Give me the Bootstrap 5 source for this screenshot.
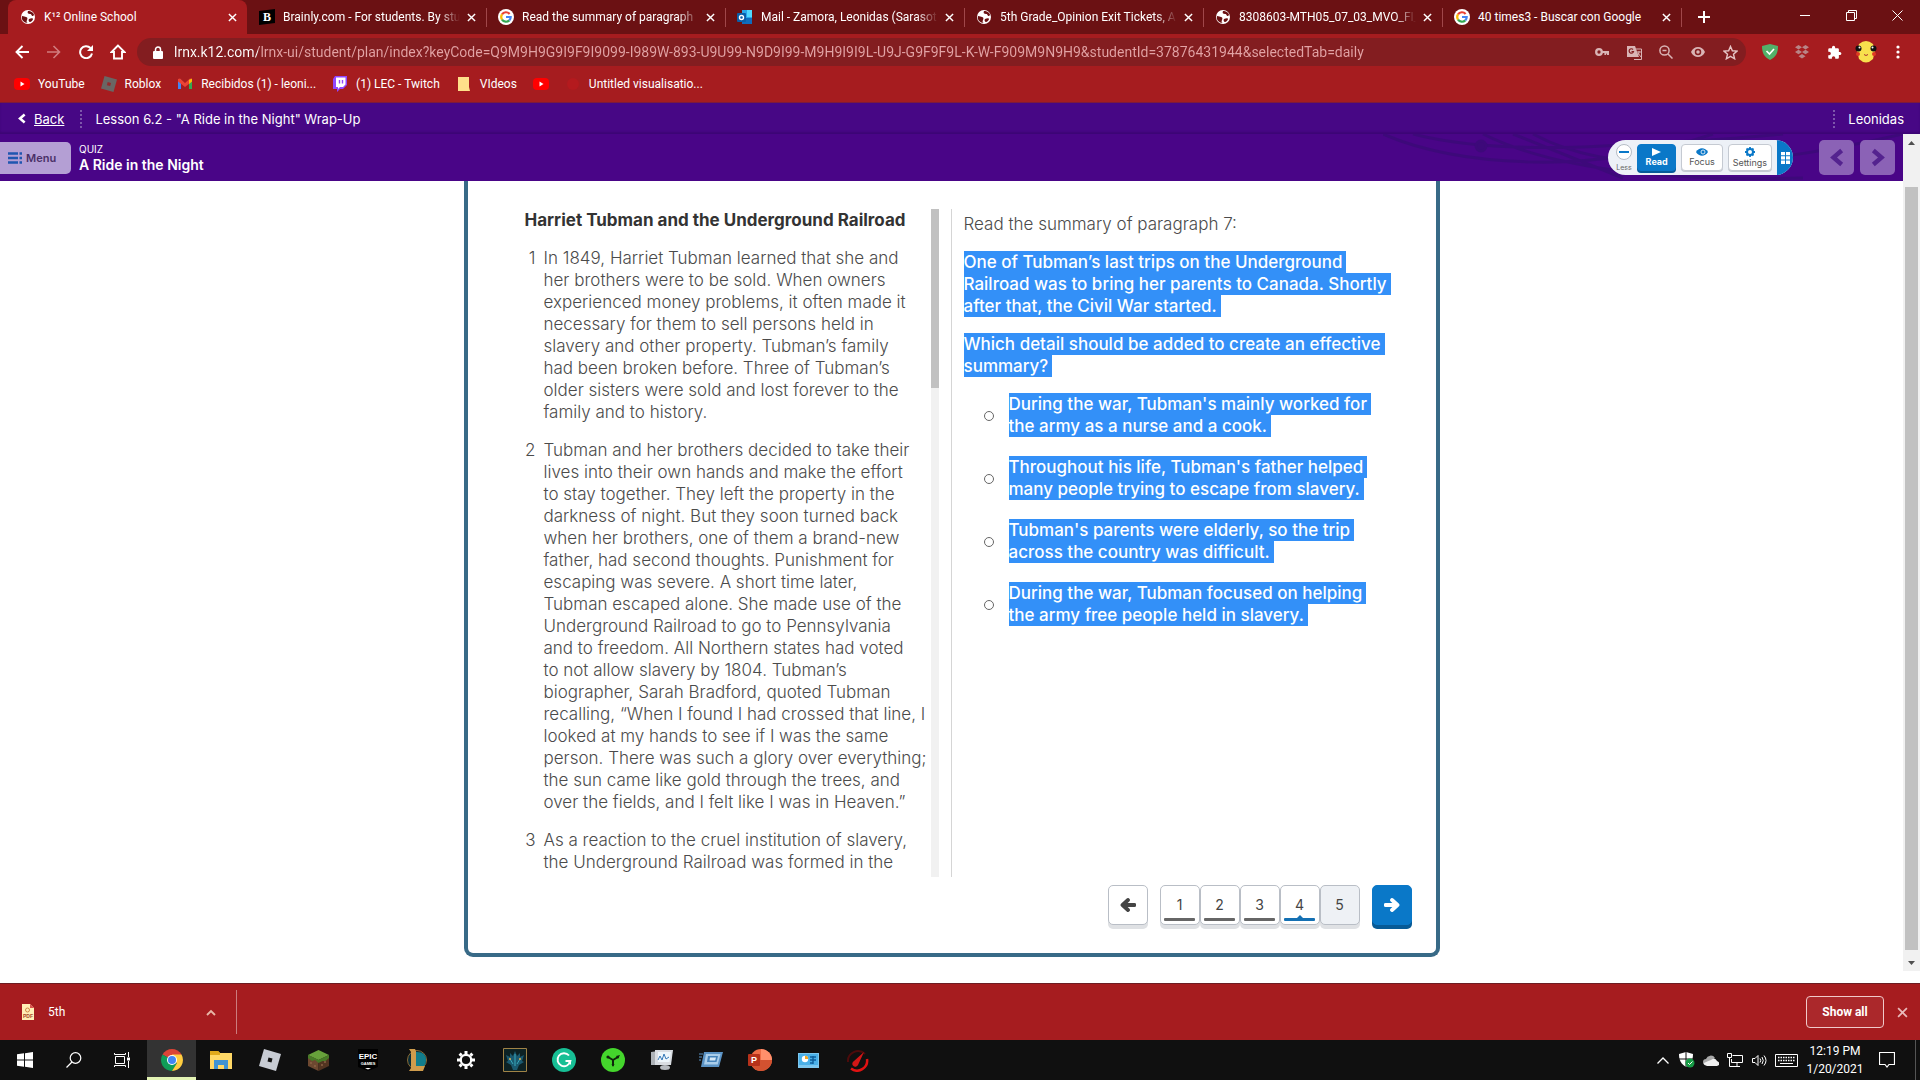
<!DOCTYPE html>
<html lang="en">
<head>
<meta charset="utf-8">
<meta name="viewport" content="width=device-width, initial-scale=1">
<title>K12 Online School</title>
<link rel="stylesheet" href="https://cdn.jsdelivr.net/npm/bootstrap@5.3.0/dist/css/bootstrap.min.css">
<style>
:root{--red:#a61c1f;--dark:#6b1113;--violet:#490587;--blue:#0a78c8;--frame:#386a87}
body{font-family:Roboto,"Liberation Sans",sans-serif;font-size:12px;line-height:16px;color:#fff;background:#fff}
button{font-family:inherit}
svg{display:block;flex:none}
a{color:inherit;text-decoration:none}
.plain{border:0;background:none;padding:0;color:inherit}
.cell{display:flex;align-items:center;justify-content:center;flex:none}
/* browser chrome */
.tabstrip{height:34px;background:var(--dark);padding-left:8px}
.tab{width:239px;height:34px;padding:0 10px 0 12px;position:relative}
.tab.on{background:var(--red);border-radius:8px 8px 0 0}
.tab+.tab+.tab::before,.newtab::before{content:"";position:absolute;left:0;top:8px;width:1px;height:19px;background:#a0474a}
.tab-title{flex:1;min-width:0;overflow:hidden;white-space:nowrap;margin-left:8px;margin-right:7px;height:16px}
.fade-end{-webkit-mask-image:linear-gradient(90deg,#000 88%,transparent)}
.newtab{position:relative;width:46px;height:34px}
.win{width:46px;height:34px;padding-bottom:4px}
.toolbar{height:36px;background:var(--red);padding:0 6px}
.nav-ic{width:32px;height:32px}
.omni{background:#831d20;border-radius:14px;height:28px;padding-left:4px;margin-left:3px;margin-right:8px}
.lock{width:33px}
.url{flex:1;min-width:0;border:0;outline:0;padding:0;font-size:14px;line-height:20px;-webkit-text-fill-color:transparent;background:linear-gradient(90deg,#fff 84px,#e2a3a5 84px);-webkit-background-clip:text;background-clip:text}
.marks{height:33px;background:var(--red);padding:0 14px 4px;gap:16px;border-bottom:1px solid #7c1a3c}
.marks a{display:flex;align-items:center;gap:8px;white-space:nowrap}
/* course header */
.course{font-family:Inter,"Open Sans",sans-serif}
.crumbs{height:31px;background:#470785;padding:0 16px 0 18px;font-size:13px;box-shadow:inset 0 -2px 2px #3d0675}
.dots{width:2px;height:18px;margin:0 13px 0 16px;background:repeating-linear-gradient(#7d57ab 0 2px,transparent 2px 4px)}
.quizbar{height:47px;background:var(--violet);position:relative}
.waves{position:absolute;right:0;top:0}
.menu-btn{width:71px;height:32px;border-radius:0 5px 5px 0;background:#b49fd4;color:#4a2f68;font-size:11px;font-weight:600;padding-left:8px}
.kicker{font-size:10px;line-height:14px}
.quiz-title{font-size:14px;line-height:18px;font-weight:600;margin:0}
.reader{height:35px;border-radius:18px;background:#edf1f7;padding-left:8px;gap:5px;overflow:hidden;width:185px;margin-right:26px}
.less{width:16px;font-size:7px;line-height:8px;color:#666}
.less i{width:16px;height:16px;border-radius:50%;background:#fff;border:1px solid #b5bcc5;display:flex;align-items:center;justify-content:center;margin-bottom:4px}
.less i::before{content:"";width:10px;height:2px;background:var(--blue)}
.rbtn{width:42px;height:27px;border-radius:4px;background:#fff;border:1px solid #c5cad2;box-shadow:0 1px 0 #c5cad2;color:#555;font-size:9px;line-height:11px;padding:0;display:flex;flex-direction:column;align-items:center;justify-content:center}
.rbtn.wide{width:45px}
.rbtn.go{width:40px;background:var(--blue);border-color:var(--blue);color:#fff;font-weight:700;box-shadow:0 2px 0 #075b99}
.cap{width:16px;height:35px;background:var(--blue)}
.steps{gap:6px;color:#54238f}
.step{width:35px;height:35px;border-radius:5px;background:#8b62b6}
/* page */
.grow-box{flex:1 1 0;min-height:0}
.sb{width:17px;background:#f1f1f1}
.sb-thumb{background:#c1c1c1;margin:0 2px}
.quiz{width:976px;max-width:100%;border:4px solid var(--frame);border-top:0;border-radius:0 0 9px 9px;margin:0 auto 14px;padding-top:28px;color:#4b4b4b;font-size:17px;line-height:22px;background:#fff}
.passage{width:463px;padding-left:57px;overflow:hidden;font-weight:300;white-space:nowrap}
.passage h1{font-size:17px;line-height:22px;font-weight:700;color:#333;margin:0 0 16px}
.para{display:flex;gap:8px;margin-bottom:16px}
.para b{width:11px;display:flex;justify-content:flex-end;font-weight:300}
.inner-sb{width:8px;background:#f1f1f1;margin-right:12px}
.inner-sb div{height:179px;background:#c1c1c1}
.question{border-left:1px solid #d5d5d5;padding:4px 0 0 12px;white-space:nowrap}
.question p{margin-bottom:16px}
.sel{background:rgba(0,116,246,.8);color:#fff;font-weight:500;padding:1px 4px 1px 0;-webkit-box-decoration-break:clone;box-decoration-break:clone}
.answer{display:flex;align-items:center;margin-bottom:19px;padding-left:20px}
.answer input{appearance:none;width:10px;height:10px;border:1px solid #666;border-radius:50%;margin:2px 15px 0 0;background:#fff}
.pager{padding:8px 24px 24px 0;font-size:14px}
.pg{width:40px;height:40px;border:1px solid #b9bec6;border-radius:5px;background:#fff;color:#444;box-shadow:0 4px 0 #dfe1e4;margin-bottom:4px;padding:0;position:relative;display:flex;align-items:center;justify-content:center}
.pg.done::after,.pg.now::after{content:"";position:absolute;left:3px;right:4px;bottom:3px;height:3px;border-radius:1px;background:#666}
.pg.now::after{background:#1470b3}
.pg.now::before{content:"";position:absolute;left:16px;bottom:6px;border:3px solid transparent;border-top:0;border-bottom-color:#1470b3}
.pg.todo{background:#eef1f5}
.pg.next{background:var(--blue);border-color:var(--blue);box-shadow:0 4px 0 #075a96}
.flip{transform:scaleX(-1)}
/* downloads and taskbar */
.shelf{height:57px;background:var(--red);border-top:1px solid #6d1c22;padding:0 12px 0 20px}
.shelf-item{width:217px;height:44px;border-right:1px solid #cb7c7e}
.show-all{width:78px;height:32px;border:1px solid #f0c9ca;border-radius:4px;background:#ab282b;color:#fff;font-weight:700;margin-right:13px;padding:0}
.taskbar{height:40px;background:#101010}
.task{width:49px;height:40px}
.task.on{background:#333;border-bottom:3px solid #e3f3b4;padding-top:3px}
.tray{width:24px}
.tray.wide{width:30px}
.clock{width:68px;line-height:18px;text-align:center}
.peek{width:1px;height:40px;background:#555;margin:0 4px 0 10px}
</style>
<script src="https://cdn.jsdelivr.net/npm/bootstrap@5.3.0/dist/js/bootstrap.bundle.min.js"></script>
</head>
<body class="vh-100 d-flex flex-column overflow-hidden">
<svg width="0" height="0" class="position-absolute">
<symbol id="x" viewBox="0 0 10 10"><path d="M1 1l8 8M9 1L1 9" stroke="currentColor" stroke-width="1.6"/></symbol>
<symbol id="globe" viewBox="0 0 16 16"><circle cx="8" cy="8" r="7" fill="#fff"/><path d="M2 7c2 0 3 1 4 1s2 1 1 3 0 3 1 3c-4 0-7-3-6-7zM8 2c-1 2 0 3 2 3s1 2 3 2l1-1c0-2-3-4-6-4zM9 10c2-1 4-1 4 0s-2 3-3 3-2-2-1-3z" fill="#6b1113"/></symbol>
<symbol id="goog" viewBox="0 0 16 16"><circle cx="8" cy="8" r="8" fill="#fff"/><g fill="none" stroke-width="2.2"><path d="M11.6 4.9A4.8 4.8 0 0 0 4 5.4" stroke="#ea4335"/><path d="M4 5.4a4.8 4.8 0 0 0 0 5.2" stroke="#fbbc05"/><path d="M4 10.6a4.8 4.8 0 0 0 7.3.8" stroke="#34a853"/><path d="M11.3 11.4A4.8 4.8 0 0 0 12.7 8H8" stroke="#4285f4"/></g></symbol>
<symbol id="yt" viewBox="0 0 16 16"><rect y="2" width="16" height="12" rx="4" fill="#f00"/><path d="M6.500 5.500v5L10.500 8z" fill="#fff"/></symbol>
<symbol id="left" viewBox="0 0 12 16"><path d="M10 2L3 8l7 6" fill="none" stroke="currentColor" stroke-width="3.8"/></symbol>
<symbol id="arrow" viewBox="0 0 16 14"><path d="M1.500 7h11M8 2l5.500 5L8 12" fill="none" stroke="currentColor" stroke-width="3.800" stroke-linecap="round" stroke-linejoin="round"/></symbol>
</svg>

<nav class="tabstrip d-flex flex-shrink-0" aria-label="Tabs">
<div class="tab on d-flex align-items-center"><svg width="16" height="16"><use href="#globe"/></svg><span class="tab-title">K¹² Online School</span><button class="plain cell" aria-label="Close tab"><svg width="9" height="9"><use href="#x"/></svg></button></div>
<div class="tab d-flex align-items-center"><svg width="16" height="16" viewBox="0 0 16 16"><path d="M0 2l16-2v14L0 16z" fill="#000"/><text x="4" y="12" font-family="Liberation Serif" font-weight="bold" font-size="12" fill="#fff">B</text></svg><span class="tab-title fade-end">Brainly.com - For students. By stu</span><button class="plain cell" aria-label="Close tab"><svg width="9" height="9"><use href="#x"/></svg></button></div>
<div class="tab d-flex align-items-center"><svg width="16" height="16"><use href="#goog"/></svg><span class="tab-title fade-end">Read the summary of paragraph</span><button class="plain cell" aria-label="Close tab"><svg width="9" height="9"><use href="#x"/></svg></button></div>
<div class="tab d-flex align-items-center"><svg width="16" height="16" viewBox="0 0 16 16"><path d="M5 1h10v14H5z" fill="#28a8ea"/><path d="M10 1h5v7h-5z" fill="#50d9ff"/><path d="M5 9h10v6H5z" fill="#0f6cbd"/><rect y="4" width="9" height="9" rx="1" fill="#0a5ea8"/><circle cx="4.500" cy="8.500" r="2" fill="none" stroke="#fff" stroke-width="1.400"/></svg><span class="tab-title fade-end">Mail - Zamora, Leonidas (Sarasot</span><button class="plain cell" aria-label="Close tab"><svg width="9" height="9"><use href="#x"/></svg></button></div>
<div class="tab d-flex align-items-center"><svg width="16" height="16"><use href="#globe"/></svg><span class="tab-title fade-end">5th Grade_Opinion Exit Tickets, A</span><button class="plain cell" aria-label="Close tab"><svg width="9" height="9"><use href="#x"/></svg></button></div>
<div class="tab d-flex align-items-center"><svg width="16" height="16"><use href="#globe"/></svg><span class="tab-title fade-end">8308603-MTH05_07_03_MVO_FI_</span><button class="plain cell" aria-label="Close tab"><svg width="9" height="9"><use href="#x"/></svg></button></div>
<div class="tab d-flex align-items-center"><svg width="16" height="16"><use href="#goog"/></svg><span class="tab-title">40 times3 - Buscar con Google</span><button class="plain cell" aria-label="Close tab"><svg width="9" height="9"><use href="#x"/></svg></button></div>
<button class="plain cell newtab" aria-label="New tab"><svg width="12" height="12" viewBox="0 0 12 12"><path d="M6 0v12M0 6h12" stroke="#fff" stroke-width="2"/></svg></button>
<div class="d-flex ms-auto">
<button class="plain cell win" aria-label="Minimize"><svg width="10" height="10"><path d="M0 5.500h10" stroke="#fff"/></svg></button>
<button class="plain cell win" aria-label="Restore"><svg width="11" height="11" viewBox="0 0 11 11"><path d="M.5 2.500h8v8h-8zM2.500 2.500v-2h8v8h-2" fill="none" stroke="#fff"/></svg></button>
<button class="plain cell win" aria-label="Close"><svg width="11" height="11" viewBox="0 0 11 11"><path d="M.5.5l10 10M10.500.5l-10 10" stroke="#fff"/></svg></button>
</div>
</nav>

<div class="toolbar d-flex align-items-center flex-shrink-0">
<button class="plain cell nav-ic" aria-label="Back"><svg width="14" height="14" viewBox="0 0 14 14"><path d="M14 7H2M7.500 1L1.500 7l6 6" fill="none" stroke="#fff" stroke-width="1.900"/></svg></button>
<button class="plain cell nav-ic" aria-label="Forward"><svg width="14" height="14" viewBox="0 0 14 14"><path d="M0 7h12M6.500 1l6 6-6 6" fill="none" stroke="#d17c7e" stroke-width="1.600"/></svg></button>
<button class="plain cell nav-ic" aria-label="Reload"><svg width="14" height="14" viewBox="0 0 14 14"><path d="M11.500 3A6 6 0 1 0 13 8.500" fill="none" stroke="#fff" stroke-width="2"/><path d="M14 0v6H8z" fill="#fff"/></svg></button>
<button class="plain cell nav-ic" aria-label="Home"><svg width="16" height="16" viewBox="0 0 16 16"><path d="M8 1.500L1.500 8H4v6.500h8V8h2.500z" fill="none" stroke="#fff" stroke-width="1.900"/></svg></button>
<div class="omni d-flex align-items-center flex-fill">
<span class="cell lock"><svg width="10" height="13" viewBox="0 0 10 13"><rect y="5" width="10" height="8" rx="1" fill="#fff"/><path d="M2.500 5V3.500a2.500 2.500 0 0 1 5 0V5" fill="none" stroke="#fff" stroke-width="1.500"/></svg></span>
<input class="url" type="text" aria-label="Address" value="lrnx.k12.com/lrnx-ui/student/plan/index?keyCode=Q9M9H9G9I9F9I9099-I989W-893-U9U99-N9D9I99-M9H9I9I9L-U9J-G9F9F9L-K-W-F909M9N9H9&amp;studentId=37876431944&amp;selectedTab=daily">
<button class="plain cell nav-ic" aria-label="Passwords"><svg width="14" height="8" viewBox="0 0 14 8"><circle cx="4" cy="4" r="2.800" fill="none" stroke="#d9b4b5" stroke-width="2.300"/><path d="M6 4h7v3M10.500 4v3" fill="none" stroke="#d9b4b5" stroke-width="2.200"/></svg></button>
<button class="plain cell nav-ic" aria-label="Translate"><svg width="15" height="15" viewBox="0 0 15 15"><path d="M0 1h8l4 11H0z" fill="#d9b4b5"/><path d="M9 4h5.500v10.500H7" fill="none" stroke="#d9b4b5"/><path d="M6 4.500a2.200 2.200 0 1 0 .5 2H4.500" fill="none" stroke="#831d20" stroke-width="1.200"/><path d="M10 7h4M12 6v1c0 2-1 3-2 4M11 8l3 4" fill="none" stroke="#d9b4b5"/></svg></button>
<button class="plain cell nav-ic" aria-label="Zoom"><svg width="14" height="14" viewBox="0 0 14 14"><circle cx="5.500" cy="5.500" r="4.600" fill="none" stroke="#d9b4b5" stroke-width="1.500"/><path d="M9 9l4.500 4.500M3.500 5.500h4" stroke="#d9b4b5" stroke-width="1.500"/></svg></button>
<button class="plain cell nav-ic" aria-label="View"><svg width="14" height="10" viewBox="0 0 14 10"><path d="M0 5c3-6.600 11-6.600 14 0-3 6.600-11 6.600-14 0z" fill="#d9b4b5"/><circle cx="7" cy="5" r="2.500" fill="none" stroke="#831d20" stroke-width="1.500"/></svg></button>
<button class="plain cell nav-ic" aria-label="Bookmark"><svg width="15" height="15" viewBox="0 0 16 16"><path d="M8 1.500l2 4.600 5 .4-3.800 3.300 1.200 4.900L8 12.100l-4.400 2.600 1.200-4.900L1 6.500l5-.4z" fill="none" stroke="#e6c5c6" stroke-width="1.500"/></svg></button>
</div>
<button class="plain cell nav-ic" aria-label="Shield"><svg width="16" height="16" viewBox="0 0 16 16"><path d="M8 0l8 2c0 7-2 11-8 14C2 13 0 9 0 2z" fill="#52b069"/><path d="M4.500 7l3 3 4.500-5" fill="none" stroke="#fff" stroke-width="1.700"/></svg></button>
<button class="plain cell nav-ic" aria-label="Dropbox"><svg width="14" height="14" viewBox="0 0 14 14"><path d="M3.500 0L7 2.200 3.500 4.500 0 2.200zM10.500 0L14 2.200l-3.500 2.300L7 2.200zM3.500 4.700L7 7 3.500 9.200 0 7zM10.500 4.700L14 7l-3.500 2.200L7 7zM7 9l3.500 2.200L7 13.500l-3.500-2.300z" fill="#b98486"/></svg></button>
<button class="plain cell nav-ic" aria-label="Extensions"><svg width="15" height="15" viewBox="0 0 24 24"><path d="M20.500 11H19V7a2 2 0 0 0-2-2h-4V3.500a2.500 2.500 0 0 0-5 0V5H4a2 2 0 0 0-2 2v3.800h1.500a2.700 2.700 0 0 1 0 5.400H2V20a2 2 0 0 0 2 2h3.800v-1.500a2.700 2.700 0 0 1 5.400 0V22H17a2 2 0 0 0 2-2v-4h1.500a2.500 2.500 0 0 0 0-5z" fill="#fff"/></svg></button>
<button class="plain cell nav-ic" aria-label="Profile"><svg width="22" height="22" viewBox="0 0 22 22"><path d="M4 3Q11-3 18 3l2 6-2 9q-7 7-14 0L2 9z" fill="#f8e04d"/><circle cx="3.500" cy="7.500" r="3" fill="#111"/><circle cx="18.500" cy="7.500" r="3" fill="#111"/><circle cx="4.500" cy="6.500" r="1" fill="#fff"/><circle cx="17.500" cy="6.500" r="1" fill="#fff"/><circle cx="3" cy="13" r="2" fill="#e03a22"/><circle cx="19" cy="13" r="2" fill="#e03a22"/><path d="M9 13.500q2 2 4 0" fill="none" stroke="#a33"/></svg></button>
<button class="plain cell nav-ic" aria-label="More"><svg width="4" height="14" viewBox="0 0 4 14"><g fill="#fff"><circle cx="2" cy="2" r="1.600"/><circle cx="2" cy="7" r="1.600"/><circle cx="2" cy="12" r="1.600"/></g></svg></button>
</div>

<nav class="marks d-flex align-items-center flex-shrink-0" aria-label="Bookmarks">
<a href="#"><svg width="16" height="16"><use href="#yt"/></svg>YouTube</a>
<a href="#"><svg width="16" height="16" viewBox="0 0 16 16"><path d="M3.500 0L16 3.500 12.500 16 0 12.500z" fill="#6a6664"/><path d="M6.700 6l3.300.9-.8 3.100-3.300-.8z" fill="#96282b"/></svg>Roblox</a>
<a href="#"><svg width="16" height="16" viewBox="0 0 16 16"><path d="M1 3h3v10H1z" fill="#4285f4"/><path d="M12 3h3v10h-3z" fill="#34a853"/><path d="M1 3l2-.500 5 4.500 5-4.500 2 .5v2.500L8 11 1 5.500z" fill="#ea4335"/><path d="M12 4l3-1.500v3L12 8z" fill="#fbbc05"/></svg>Recibidos (1) - leoni...</a>
<a href="#"><svg width="16" height="16" viewBox="0 0 16 16"><path d="M3 0h12v9l-4 4H8l-3 3v-3H1V3z" fill="#9146ff"/><path d="M4 1.500h9.500v7L11 11H8l-2 2v-2H4z" fill="#fff"/><path d="M7.500 4v3.500M10.500 4v3.500" stroke="#9146ff" stroke-width="1.400"/></svg>(1) LEC - Twitch</a>
<a href="#"><svg width="16" height="16" viewBox="0 0 16 16"><path d="M2 1h11v10l1 4H2z" fill="#ffe08a"/></svg>VIdeos</a>
<a href="#" aria-label="YouTube"><svg width="16" height="16"><use href="#yt"/></svg></a>
<a href="#"><svg width="16" height="16" viewBox="0 0 16 16"><circle cx="8" cy="8" r="6" fill="#b41a1e"/></svg>Untitled visualisatio...</a>
</nav>

<main class="course grow-box d-flex flex-column">
<header class="crumbs d-flex align-items-center flex-shrink-0">
<svg width="8" height="11" class="me-2"><use href="#left"/></svg><a href="#" class="text-decoration-underline">Back</a>
<span class="dots"></span><span>Lesson 6.2 - "A Ride in the Night" Wrap-Up</span>
<span class="dots ms-auto"></span><span>Leonidas</span>
</header>
<div class="grow-box d-flex pb-2 mb-1">
<div class="d-flex flex-column flex-fill">
<div class="quizbar d-flex align-items-center flex-shrink-0">
<svg class="waves" width="520" height="47" fill="none" stroke="#3b0a78" stroke-width="3" opacity=".8"><path d="M0 0Q60 26 150 28T330 0M30 0Q100 18 220 12T400 0M100 0Q200 50 420 44M130 0L240 44M150 0Q260 60 520 0"/><circle cx="98" cy="12" r="5" fill="#3b0a78"/></svg>
<button class="plain menu-btn d-flex align-items-center gap-1"><svg width="14" height="12" viewBox="0 0 14 12"><path d="M0 1.500h10M0 6h10M0 10.500h10M11.500 1.500H14M11.500 6H14M11.500 10.500H14" stroke="#1f56b0" stroke-width="2.400"/></svg>Menu</button>
<div class="ms-2"><div class="kicker">QUIZ</div><h2 class="quiz-title">A Ride in the Night</h2></div>
<div class="reader d-flex align-items-center ms-auto position-relative">
<button class="plain less d-flex flex-column align-items-center"><i></i>Less</button>
<button class="rbtn go"><svg width="9" height="8" viewBox="0 0 9 8"><path d="M0 0l9 4-9 4z" fill="#fff"/></svg>Read</button>
<button class="rbtn"><svg width="12" height="8" viewBox="0 0 12 8"><path d="M0 4c3-5 9-5 12 0-3 5-9 5-12 0z" fill="#0a78c8"/><circle cx="7" cy="4" r="2" fill="none" stroke="#fff" stroke-width=".8"/></svg>Focus</button>
<button class="rbtn wide"><svg width="10" height="10" viewBox="0 0 10 10"><circle cx="5" cy="5" r="3" fill="none" stroke="#0a78c8" stroke-width="2"/><path d="M5 0v2M5 8v2M0 5h2M8 5h2M1.500 1.500l1.400 1.400M7.100 7.100l1.400 1.400M8.500 1.500L7.100 2.900M2.900 7.100L1.500 8.500" stroke="#0a78c8" stroke-width="1.800"/></svg>Settings</button>
<button class="plain cap cell ms-auto" aria-label="Move toolbar"><svg width="9" height="12" viewBox="0 0 9 12"><path d="M0 0h4v3.300H0zM5 0h4v3.300H5zM0 4.300h4v3.300H0zM5 4.300h4v3.300H5zM0 8.600h4V12H0zM5 8.600h4V12H5z" fill="#fff"/></svg></button>
</div>
<div class="steps d-flex pe-2 position-relative">
<button class="plain step cell" aria-label="Previous"><svg width="14" height="19"><use href="#left"/></svg></button>
<button class="plain step cell" aria-label="Next"><svg class="flip" width="14" height="19"><use href="#left"/></svg></button>
</div>
</div>
<section class="quiz grow-box d-flex flex-column">
<div class="grow-box d-flex">
<article class="passage">
<h1>Harriet Tubman and the Underground Railroad</h1>
<div class="para"><b>1</b><span>In 1849, Harriet Tubman learned that she and<br>her brothers were to be sold. When owners<br>experienced money problems, it often made it<br>necessary for them to sell persons held in<br>slavery and other property. Tubman’s family<br>had been broken before. Three of Tubman’s<br>older sisters were sold and lost forever to the<br>family and to history.</span></div>
<div class="para"><b>2</b><span>Tubman and her brothers decided to take their<br>lives into their own hands and make the effort<br>to stay together. They left the property in the<br>darkness of night. But they soon turned back<br>when her brothers, one of them a brand-new<br>father, had second thoughts. Punishment for<br>escaping was severe. A short time later,<br>Tubman escaped alone. She made use of the<br>Underground Railroad to go to Pennsylvania<br>and to freedom. All Northern states had voted<br>to not allow slavery by 1804. Tubman’s<br>biographer, Sarah Bradford, quoted Tubman<br>recalling, “When I found I had crossed that line, I<br>looked at my hands to see if I was the same<br>person. There was such a glory over everything;<br>the sun came like gold through the trees, and<br>over the fields, and I felt like I was in Heaven.”</span></div>
<div class="para"><b>3</b><span>As a reaction to the cruel institution of slavery,<br>the Underground Railroad was formed in the</span></div>
</article>
<div class="inner-sb"><div></div></div>
<div class="question">
<p class="fw-light">Read the summary of paragraph 7:</p>
<p><span class="sel">One of Tubman’s last trips on the Underground<br>Railroad was to bring her parents to Canada. Shortly<br>after that, the Civil War started.</span></p>
<p><span class="sel">Which detail should be added to create an effective<br>summary?</span></p>
<div class="answer"><input type="radio" name="a" id="a1"><label for="a1"><span class="sel">During the war, Tubman's mainly worked for<br>the army as a nurse and a cook.</span></label></div>
<div class="answer"><input type="radio" name="a" id="a2"><label for="a2"><span class="sel">Throughout his life, Tubman's father helped<br>many people trying to escape from slavery.</span></label></div>
<div class="answer"><input type="radio" name="a" id="a3"><label for="a3"><span class="sel">Tubman's parents were elderly, so the trip<br>across the country was difficult.</span></label></div>
<div class="answer"><input type="radio" name="a" id="a4"><label for="a4"><span class="sel">During the war, Tubman focused on helping<br>the army free people held in slavery.</span></label></div>
</div>
</div>
<div class="pager d-flex justify-content-end">
<button class="pg me-2" aria-label="Previous question"><svg class="flip" width="16" height="14"><use href="#arrow"/></svg></button>
<div class="d-flex ms-1 me-2"><button class="pg done">1</button><button class="pg done">2</button><button class="pg done">3</button><button class="pg now">4</button><button class="pg todo">5</button></div>
<button class="pg next ms-1 text-white" aria-label="Next question"><svg width="16" height="14"><use href="#arrow"/></svg></button>
</div>
</section>
</div>
<div class="sb d-flex flex-column">
<span class="cell" style="height:17px"><svg width="7" height="4"><path d="M0 4l3.500-4L7 4z" fill="#505050"/></svg></span>
<div style="flex:36"></div><div class="sb-thumb" style="flex:762"></div><div style="flex:4"></div>
<span class="cell" style="height:17px"><svg width="7" height="4"><path d="M0 0l3.500 4L7 0z" fill="#505050"/></svg></span>
</div>
</div>
</main>

<div class="shelf d-flex align-items-center flex-shrink-0">
<div class="shelf-item d-flex align-items-center"><svg width="16" height="18" viewBox="0 0 16 18"><path d="M2 1h8l4 4v12H2z" fill="#ffefb5"/><path d="M10 1v4h4" fill="#d9534f"/><text x="3" y="15" font-family="Liberation Sans" font-weight="bold" font-size="5" fill="#a6462a">PDF</text><circle cx="7.500" cy="7" r="2" fill="none" stroke="#d08a4a"/></svg><span class="ms-2 ps-1">5th</span><button class="plain ms-auto me-3 pe-1" aria-label="Options"><svg width="10" height="7" viewBox="0 0 10 7"><path d="M1 6l4-4 4 4" fill="none" stroke="#e8b7a8" stroke-width="1.900"/></svg></button></div>
<button class="show-all ms-auto">Show all</button>
<button class="plain cell" aria-label="Close downloads"><svg width="11" height="11" style="color:#e9b9ba"><use href="#x"/></svg></button>
</div>

<footer class="taskbar d-flex align-items-center flex-shrink-0">
<button class="plain cell task" aria-label="Start"><svg width="16" height="16" viewBox="0 0 16 16"><path d="M0 2.300l7-1v6.200H0zM8 1.200L16 0v7.500H8zM0 8.500h7v6.200l-7-1zM8 8.500h8V16l-8-1.200z" fill="#fff"/></svg></button>
<button class="plain cell task" aria-label="Search"><svg width="16" height="16" viewBox="0 0 16 16"><circle cx="9.500" cy="6" r="5.300" fill="none" stroke="#fff" stroke-width="1.200"/><path d="M6 10l-5.500 5.500" stroke="#fff" stroke-width="1.300"/></svg></button>
<button class="plain cell task" aria-label="Task view"><svg width="17" height="16" viewBox="0 0 17 16"><path d="M1.500 4.500h9v7h-9zM.5 1v1.500h11V1M.5 15v-1.500h11V15M14.500 0v5M14.500 9v7" fill="none" stroke="#fff"/><path d="M13 5.500h3v3h-3z" fill="#fff"/></svg></button>
<button class="plain cell task on" aria-label="Chrome"><svg width="22" height="22" viewBox="0 0 22 22"><path d="M11 11L1.500 5.500A11 11 0 0 1 20.500 5.500z" fill="#db4437"/><path d="M11 11L1.500 5.500A11 11 0 0 0 11 22l5-8z" fill="#0f9d58"/><path d="M11 11l5 3-5 8A11 11 0 0 0 20.500 5.500H11z" fill="#ffcd40"/><circle cx="11" cy="11" r="5" fill="#fff"/><circle cx="11" cy="11" r="4" fill="#4285f4"/></svg></button>
<button class="plain cell task" aria-label="File Explorer"><svg width="22" height="18" viewBox="0 0 22 18"><path d="M0 0h8l2 2h12v16H0z" fill="#ffd866"/><path d="M0 0h8l2 2v2H0z" fill="#e0a91b"/><path d="M4 18v-9h14v9h-4v-4H8v4z" fill="#3f93d2"/></svg></button>
<button class="plain cell task" aria-label="Roblox"><svg width="22" height="22" viewBox="0 0 22 22"><path d="M5 0l17 5-5 17L0 17z" fill="#c8ccd4"/><path d="M9.500 8.500l4 1-1 4-4-1z" fill="#111"/></svg></button>
<button class="plain cell task" aria-label="Minecraft"><svg width="21" height="21" viewBox="0 0 21 21"><path d="M0 5l10.500 5v11L0 16z" fill="#6d4830"/><path d="M21 5l-10.500 5v11L21 16z" fill="#523421"/><path d="M10.500 0L21 5l-10.500 5L0 5z" fill="#67a13b"/><path d="M0 5l10.500 5v3L7 10l-3 1-4-3zM21 5l-10.500 5v3l4-2 3 0 3.500-3z" fill="#477b27"/><path d="M3 12v2M7 15v2M14 14v2M17 11v2" stroke="#8a6244" stroke-width="1.500"/></svg></button>
<button class="plain cell task" aria-label="Epic Games"><svg width="20" height="22" viewBox="0 0 20 22"><path d="M0 0h20v18l-10 4-10-4z" fill="#000"/><text x="10" y="10" text-anchor="middle" font-family="Liberation Sans" font-weight="bold" font-size="8" fill="#fff">EPIC</text><text x="10" y="16" text-anchor="middle" font-family="Liberation Sans" font-weight="bold" font-size="4" fill="#fff">GAMES</text><path d="M7 19h6l-3 1.500z" fill="#fff"/></svg></button>
<button class="plain cell task" aria-label="League of Legends"><svg width="22" height="22" viewBox="0 0 22 22"><circle cx="11" cy="11" r="9.500" fill="#092c38" stroke="#8a6b35"/><path d="M9 3q11-1 11 8 0 4-2 6H9z" fill="#117d8b"/><path d="M3 0h6l1 2v15h9l-2 5H3l2-3V3z" fill="#cf9c4c"/></svg></button>
<button class="plain cell task" aria-label="Settings"><svg width="18" height="18" viewBox="0 0 18 18"><circle cx="9" cy="9" r="5.200" fill="none" stroke="#fff" stroke-width="2.200"/><path d="M9 0v3M9 15v3M0 9h3M15 9h3M2.600 2.600l2 2M13.400 13.400l2 2M15.400 2.600l-2 2M4.600 13.400l-2 2" stroke="#fff" stroke-width="3"/></svg></button>
<button class="plain cell task" aria-label="Hydra"><svg width="24" height="24" viewBox="0 0 24 24"><path d="M.5.5h23v23H.5z" fill="#0d2224" stroke="#a08346"/><path d="M12 3l2 5 3-3 0 4 4-2-2 6 2 1-5 3-2 5h-4l-2-5-5-3 2-1-2-6 4 2V5l3 3z" fill="#1a5a70"/><path d="M12 6v12M7 11l3 5M17 11l-3 5" stroke="#38a8bb"/><circle cx="7" cy="11" r="1" fill="#e0b04e"/><circle cx="17" cy="11" r="1" fill="#e0b04e"/></svg></button>
<button class="plain cell task" aria-label="Grammarly"><svg width="24" height="24" viewBox="0 0 24 24"><circle cx="12" cy="12" r="12" fill="#17bf95"/><path d="M17 7.500A6.500 6.500 0 1 0 18.400 13H13.500" fill="none" stroke="#fff" stroke-width="1.900"/><path d="M15 13h4v4z" fill="#fff"/></svg></button>
<button class="plain cell task" aria-label="Razer"><svg width="24" height="24" viewBox="0 0 24 24"><circle cx="12" cy="12" r="12" fill="#44d62c"/><path d="M12 12v5M12 12L7 9M12 12l5-3" stroke="#10240c" stroke-width="2" stroke-linecap="round"/><circle cx="7" cy="9" r="1.600" fill="#10240c"/><path d="M15 8l4-1-2 4zM10.500 16h3L12 19z" fill="#10240c"/></svg></button>
<button class="plain cell task" aria-label="Performance"><svg width="22" height="22" viewBox="0 0 22 22"><path d="M0 3l7-1v14H0z" fill="#aeb3b8"/><path d="M4 1h18l-2 15H4z" fill="#d9dde2"/><path d="M7 3h13l-1.500 10H7z" fill="#eef6fb"/><path d="M7 11l2-4 2 4 2-6 2 5 3-2" fill="none" stroke="#3579b8"/><ellipse cx="14" cy="18.500" rx="5" ry="2.500" fill="#b7bbc0"/></svg></button>
<button class="plain cell task" aria-label="Run"><svg width="24" height="16" viewBox="0 0 24 16"><path d="M5 0h19l-4 15H2z" fill="#5b93c5"/><path d="M7 2h14.500l-2.800 10.500H5z" fill="#a9cdea"/><path d="M9 4h10l-1.500 6H8z" fill="#4583ba"/><path d="M11 5.500h6l-.8 3H10.500z" fill="#d6e9f7"/><path d="M0 2h4M0 5h3M0 8h2" stroke="#5b93c5"/></svg></button>
<button class="plain cell task" aria-label="PowerPoint"><svg width="24" height="22" viewBox="0 0 24 22"><circle cx="13" cy="11" r="11" fill="#ed6c47"/><path d="M13 0a11 11 0 0 1 11 11H13z" fill="#ff8f6b"/><path d="M2 11h22a11 11 0 0 1-22 0z" fill="#d35230"/><rect y="5" width="12" height="12" rx="1" fill="#b7311a"/><text x="3" y="14" font-family="Liberation Sans" font-weight="bold" font-size="9" fill="#fff">P</text></svg></button>
<button class="plain cell task" aria-label="Control Panel"><svg width="21" height="15" viewBox="0 0 21 15"><path d="M0 0h21v15H0z" fill="#7cc7ef"/><path d="M1 1h19v11H1z" fill="#4ab0e8"/><circle cx="7" cy="6" r="3.200" fill="#fff"/><path d="M7 6V2.800A3.200 3.200 0 0 1 10.200 6z" fill="#f6a821"/><path d="M12 4h6M12 7h6M12 10h3M15 3v8" stroke="#0e5d9b" stroke-width="1.400"/></svg></button>
<button class="plain cell task" aria-label="Tuner"><svg width="23" height="23" viewBox="0 0 23 23"><path d="M5 19.500A10 10 0 0 0 21 10" fill="none" stroke="#e01212" stroke-width="2.500"/><path d="M2 13A10 10 0 0 1 19 5" fill="none" stroke="#4d0b0b" stroke-width="2"/><path d="M18 3L8 12a3 3 0 1 0 4 4z" fill="#d31616"/></svg></button>
<div class="ms-auto d-flex align-items-center">
<span class="cell tray"><svg width="12" height="7" viewBox="0 0 12 7"><path d="M.5 6.500L6 1l5.500 5.500" fill="none" stroke="#fff" stroke-width="1.300"/></svg></span>
<span class="cell tray"><svg width="16" height="16" viewBox="0 0 16 16"><path d="M7 0l7 2c0 6-2 10-7 13C2 12 0 8 0 2z" fill="#fff"/><path d="M7 0v15M0 7h14" stroke="#101010"/><circle cx="11" cy="11" r="4.500" fill="#169b45"/><path d="M9 11l1.500 1.500L13.500 9.500" fill="none" stroke="#fff"/></svg></span>
<span class="cell tray"><svg width="16" height="11" viewBox="0 0 16 11"><path d="M3 10a3 3 0 0 1 0-6A5 5 0 0 1 12 3z" fill="#a9a9a9"/><path d="M4 11q-4-1-3-3Q5 6 8 5q4-3 6 1 3 1 2 4l-2 1z" fill="#efefef"/></svg></span>
<span class="cell tray"><svg width="16" height="14" viewBox="0 0 16 14"><path d="M5.500 2.500h10v7h-11V6M10 9.500V13M6 13.500h7M.5.5h4v4h-4zM2.500 5v8.500H6" fill="none" stroke="#fff"/></svg></span>
<span class="cell tray"><svg width="15" height="13" viewBox="0 0 15 13"><path d="M.5 4.500H3l3-3v10l-3-3H.5zM8 4.500q1.500 2 0 4M10 3q2.500 3.500 0 7M12 1.500q4 5 0 10" fill="none" stroke="#fff"/></svg></span>
<span class="cell tray wide"><svg width="23" height="13" viewBox="0 0 23 13"><path d="M.5.5h22v12H.5z" fill="none" stroke="#fff"/><path d="M3 3.500h17M3 6.500h17" stroke="#fff" stroke-width="1.400" stroke-dasharray="1.500 1"/><path d="M5 9.500h13" stroke="#fff"/></svg></span>
<div class="clock">12:19 PM<br>1/20/2021</div>
<button class="plain cell" style="width:36px" aria-label="Notifications"><svg width="16" height="16" viewBox="0 0 16 16"><path d="M.5.5h15v12H10l-2 2.500-2-2.500H.5z" fill="none" stroke="#fff" stroke-width="1.200"/></svg></button>
<span class="peek"></span>
</div>
</footer>
</body>
</html>
